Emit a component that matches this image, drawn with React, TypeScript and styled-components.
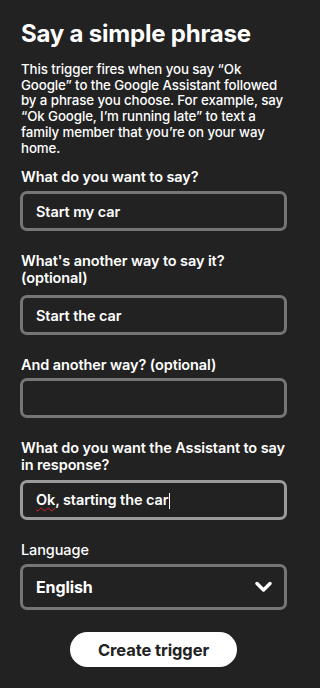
import React from "react";
import styled, { createGlobalStyle } from "styled-components";

const Global = createGlobalStyle`
  html, body { margin: 0; padding: 0; background: #222222; }
  body { font-family: Inter, "Open Sans", Arial, sans-serif; color: #fff; }
  * { box-sizing: border-box; }
`;

const Page = styled.div`
  width: 309px;
  min-height: 688px;
  background: #222222;
  padding: 16px 22px 20px 20px;
  display: flex;
  flex-direction: column;
`;

const Title = styled.h1`
  margin: 0 0 0 1px;
  font-size: 24px;
  line-height: 36px;
  font-weight: 700;
  letter-spacing: -0.2px;
  color: #fff;
`;

const Intro = styled.p`
  margin: 10px 0 0 1px;
  font-size: 13.3px;
  line-height: 15.7px;
  font-weight: 500;
  letter-spacing: -0.1px;
  color: #fff;
`;

const Form = styled.div`
  display: flex;
  flex-direction: column;
  gap: 21px;
  margin-top: 12px;
`;

const Field = styled.div<{ $gap?: number }>`
  display: flex;
  flex-direction: column;
  gap: ${(p) => p.$gap ?? 6}px;
`;

const Label = styled.label<{ $light?: boolean }>`
  margin-left: 1px;
  font-size: 14.5px;
  line-height: 17px;
  font-weight: ${(p) => (p.$light ? 500 : 600)};
  letter-spacing: -0.1px;
  color: #fff;
`;

const Box = styled.div<{ $focused?: boolean; $tall?: boolean }>`
  height: ${(p) => (p.$tall ? 46 : 40)}px;
  border: 3px solid ${(p) => (p.$focused ? "#9b9b9b" : "#767676")};
  border-radius: 7px;
  background: #222222;
  display: flex;
  align-items: center;
  padding: 0 13px;
  font-size: ${(p) => (p.$tall ? 16 : 14.5)}px;
  font-weight: ${(p) => (p.$tall ? 700 : 600)};
  letter-spacing: -0.1px;
  color: #fff;
`;

const Value = styled.span`
  flex: 1;
  white-space: nowrap;
`;

const Squiggle = styled.span`
  text-decoration: underline wavy #d22;
  text-decoration-thickness: 1px;
  text-underline-offset: 2px;
`;

const Caret = styled.span`
  display: inline-block;
  width: 1px;
  height: 16px;
  background: #fff;
  vertical-align: middle;
  margin-left: 1px;
`;

const Chevron = styled.svg`
  width: 17px;
  height: 12px;
  flex: none;
  margin-right: -1px;
`;

const Actions = styled.div`
  display: flex;
  justify-content: center;
  margin-top: 22px;
`;

const Button = styled.button`
  width: 167px;
  height: 35px;
  border: none;
  border-radius: 18px;
  background: #fff;
  color: #222;
  font-family: inherit;
  font-size: 16.5px;
  font-weight: 700;
  letter-spacing: -0.1px;
  cursor: pointer;
`;

export default function App() {
  return (
    <>
      <Global />
      <Page>
        <Title>Say a simple phrase</Title>
        <Intro>
          This trigger fires when you say “Ok Google” to the Google Assistant followed by a phrase
          you choose. For example, say “Ok Google, I’m running late” to text a family member that
          you’re on your way home.
        </Intro>
        <Form>
          <Field $gap={6}>
            <Label>What do you want to say?</Label>
            <Box>
              <Value>Start my car</Value>
            </Box>
          </Field>
          <Field $gap={9}>
            <Label>
              What's another way to say it?
              <br />
              (optional)
            </Label>
            <Box>
              <Value>Start the car</Value>
            </Box>
          </Field>
          <Field $gap={5}>
            <Label>And another way? (optional)</Label>
            <Box />
          </Field>
          <Field $gap={7}>
            <Label>
              What do you want the Assistant to say
              <br />
              in response?
            </Label>
            <Box $focused>
              <Value>
                <Squiggle>Ok</Squiggle>, starting the car
                <Caret />
              </Value>
            </Box>
          </Field>
          <Field $gap={6}>
            <Label $light>Language</Label>
            <Box $tall>
              <Value>English</Value>
              <Chevron viewBox="0 0 17 12">
                <path d="M2 2.5 L8.5 9 L15 2.5" fill="none" stroke="#fff" strokeWidth="3.4" strokeLinecap="round" strokeLinejoin="round" />
              </Chevron>
            </Box>
          </Field>
        </Form>
        <Actions>
          <Button>Create trigger</Button>
        </Actions>
      </Page>
    </>
  );
}
